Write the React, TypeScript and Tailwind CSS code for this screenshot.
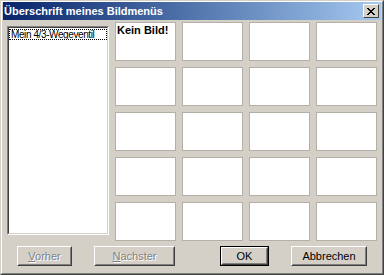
import React from "react";

const font = { fontFamily: '"Liberation Sans", Arial, sans-serif' };

function Btn({ label, w, disabled, def, underline }: { label: string; w: number; disabled?: boolean; def?: boolean; underline?: boolean }) {
  const first = label[0];
  const rest = label.slice(1);
  const content = underline ? (
    <>
      <span className="underline">{first}</span>
      {rest}
    </>
  ) : (
    label
  );
  return (
    <div
      className={`h-[20px] ${def ? "border border-black" : ""}`}
      style={{ width: w }}
    >
      <div className="h-full w-full border border-t-white border-l-white border-r-[#404040] border-b-[#404040]">
        <div className="flex h-full w-full items-center justify-center border border-t-[#d4d0c8] border-l-[#d4d0c8] border-r-[#808080] border-b-[#808080] text-[11px] leading-none">
          {disabled ? (
            <span className="text-[#808080] [text-shadow:1px_1px_0_#ffffff]">{content}</span>
          ) : (
            <span className="text-black">{content}</span>
          )}
        </div>
      </div>
    </div>
  );
}

export default function App() {
  const cells = Array.from({ length: 20 }, (_, i) => i);
  return (
    <div style={font} className="h-[275px] w-[384px] bg-[#d4d0c8] border border-t-[#d4d0c8] border-l-[#d4d0c8] border-r-[#404040] border-b-[#404040]">
      <div className="flex h-full w-full flex-col border border-t-white border-l-white border-r-[#808080] border-b-[#808080] px-px">
        <div className="flex h-[18px] items-center justify-between bg-gradient-to-r from-[#0a246a] to-[#a6caf0] pl-[1px] pr-[2px]">
          <span className="text-[11px] font-bold leading-none text-white">Überschrift meines Bildmenüs</span>
          <div className="flex h-[14px] w-[16px] items-center justify-center border border-t-white border-l-white border-r-[#404040] border-b-[#404040] bg-[#d4d0c8]">
            <svg width="8" height="7" viewBox="0 0 8 7">
              <path d="M0 0h2v1h1v1h2v-1h1v-1h2v1h-1v1h-1v1h-1v1h1v1h1v1h1v1h-2v-1h-1v-1h-2v1h-1v1h-2v-1h1v-1h1v-1h1v-1h-1v-1h-1v-1h-1z" fill="black" />
            </svg>
          </div>
        </div>
        <div className="flex pl-[4px] pt-[2px]">
          <div className="mt-[4px] h-[209px] w-[102px] border border-t-[#808080] border-l-[#808080] border-r-white border-b-white">
            <div className="h-full w-full border border-t-[#404040] border-l-[#404040] border-r-[#d4d0c8] border-b-[#d4d0c8] bg-white">
              <div className="mt-px flex h-[11px] items-center overflow-hidden whitespace-nowrap border border-dotted border-black pl-px text-[10px] leading-none tracking-[-0.4px] text-black">
                Mein 4/3-Wegeventil
              </div>
            </div>
          </div>
          <div className="ml-[6px] grid grid-cols-[repeat(4,61px)] grid-rows-[repeat(5,39px)] gap-x-[6px] gap-y-[6px]">
            {cells.map((i) => (
              <div key={i} className="border border-[#b4b0a8] bg-white">
                {i === 0 && (
                  <div className="pl-px pt-px text-[11px] font-bold leading-[12px] text-black">Kein Bild!</div>
                )}
              </div>
            ))}
          </div>
        </div>
        <div className="mt-[5px] flex items-center pl-[14px]">
          <Btn label="Vorher" w={55} disabled underline />
          <div className="w-[22px]" />
          <Btn label="Nachster" w={81} disabled underline />
          <div className="w-[45px]" />
          <Btn label="OK" w={49} def />
          <div className="w-[22px]" />
          <Btn label="Abbrechen" w={76} />
        </div>
      </div>
    </div>
  );
}
